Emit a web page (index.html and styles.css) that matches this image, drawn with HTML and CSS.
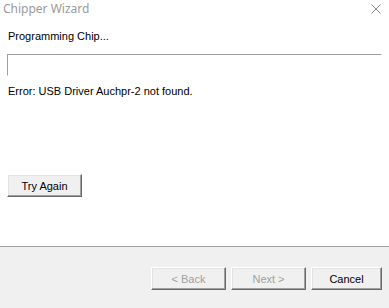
FILE: index.html
```html
<!DOCTYPE html>
<html lang="en">
<head>
    <meta charset="UTF-8">
    <title>Chipper Wizard</title>
    <link rel="stylesheet" href="styles.css">
</head>
<body>
    <div class="window">
        <header class="titlebar">
            <span class="title">Chipper Wizard</span>
            <svg class="close" width="10" height="10" viewBox="0 0 10 10">
                <path d="M0.5 0.5 L9.5 9.5 M9.5 0.5 L0.5 9.5" stroke="#8a8a8a" stroke-width="1" fill="none"/>
            </svg>
        </header>

        <div class="content">
            <p class="label">Programming Chip...</p>
            <div class="progress"></div>
            <p class="label error">Error: USB Driver Auchpr-2 not found.</p>
            <button class="btn btn-retry">Try Again</button>
        </div>

        <footer class="footer">
            <button class="btn" disabled>&lt; Back</button>
            <button class="btn" disabled>Next &gt;</button>
            <button class="btn btn-cancel">Cancel</button>
        </footer>
    </div>
</body>
</html>
```

FILE: styles.css
```css
* {
    margin: 0;
    padding: 0;
    box-sizing: border-box;
}

body {
    font-family: 'Liberation Sans', Arial, sans-serif;
    font-size: 11px;
    color: #000;
    background: #fff;
}

.window {
    width: 389px;
    height: 308px;
    display: flex;
    flex-direction: column;
    background: #fff;
}

.titlebar {
    height: 22px;
    display: flex;
    justify-content: space-between;
    align-items: flex-start;
    padding: 0 8px 0 3px;
}

.title {
    font-family: 'Noto Sans', 'Open Sans', sans-serif;
    font-size: 12px;
    line-height: 18px;
    color: #9a9a9a;
}

.close {
    margin-top: 4px;
}

.content {
    flex: 1;
    padding: 8px 7px 0 8px;
}

.label {
    line-height: 13px;
}

.progress {
    height: 22px;
    margin: 11px 0 9px -1px;
    border-top: 1px solid #a0a0a0;
    border-left: 1px solid #a0a0a0;
    border-bottom: 1px solid #fff;
    border-right: 1px solid #fff;
}

.btn {
    width: 75px;
    height: 23px;
    font-family: 'Liberation Sans', Arial, sans-serif;
    font-size: 11px;
    color: #000;
    background: #f0f0f0;
    border: 1px solid;
    border-color: #fff #696969 #696969 #fff;
    box-shadow: inset -1px -1px #a0a0a0, inset 1px 1px #e3e3e3;
}

.btn:disabled {
    color: #a0a0a0;
}

.btn-cancel {
    width: 71px;
}

.btn-retry {
    display: block;
    margin: 76px 0 0 -1px;
}

.footer {
    height: 62px;
    background: #f0f0f0;
    border-top: 1px solid #a0a0a0;
    display: flex;
    justify-content: flex-end;
    gap: 5px;
    padding: 20px 7px 0 0;
}
```
